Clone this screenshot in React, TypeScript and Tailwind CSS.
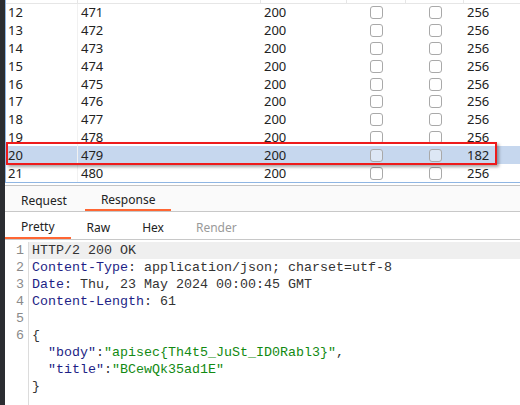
import React from 'react';

const rows = [
  { id: 12, payload: 471, length: 256 },
  { id: 13, payload: 472, length: 256 },
  { id: 14, payload: 473, length: 256 },
  { id: 15, payload: 474, length: 256 },
  { id: 16, payload: 475, length: 256 },
  { id: 17, payload: 476, length: 256 },
  { id: 18, payload: 477, length: 256 },
  { id: 19, payload: 478, length: 256 },
  { id: 20, payload: 479, length: 182 },
  { id: 21, payload: 480, length: 256 },
];

const Checkbox: React.FC = () => (
  <div className="w-[13px] h-[13px] rounded-[3px] border border-[#a9a9a9] bg-white/40" />
);

const Key: React.FC<{ children: React.ReactNode }> = ({ children }) => (
  <span className="text-[#1d1f86]">{children}</span>
);

const Str: React.FC<{ children: React.ReactNode }> = ({ children }) => (
  <span className="text-[#128a12]">{children}</span>
);

// the json body is one logical line (6), soft-wrapped by the editor
const lines: { num?: number; text: React.ReactNode }[] = [
  { num: 1, text: <>HTTP/2 200 OK</> },
  {
    num: 2,
    text: (
      <>
        <Key>Content-Type</Key>: application/json; charset=utf-8
      </>
    ),
  },
  {
    num: 3,
    text: (
      <>
        <Key>Date</Key>: Thu, 23 May 2024 00:00:45 GMT
      </>
    ),
  },
  {
    num: 4,
    text: (
      <>
        <Key>Content-Length</Key>: 61
      </>
    ),
  },
  { num: 5, text: <></> },
  { num: 6, text: <>{'{'}</> },
  {
    text: (
      <>
        {'  '}
        <Key>"body"</Key>:<Str>"apisec{'{'}Th4t5_JuSt_ID0Rabl3{'}'}"</Str>,
      </>
    ),
  },
  {
    text: (
      <>
        {'  '}
        <Key>"title"</Key>:<Str>"BCewQk35ad1E"</Str>
      </>
    ),
  },
  { text: <>{'}'}</> },
];

const App: React.FC = () => {
  return (
    <div className="flex w-[520px] h-[405px] overflow-hidden bg-white text-[#222] font-['Noto_Sans',sans-serif]">
      <div className="w-[5px] shrink-0 bg-[#2b2d31]" />
      <div className="flex-1 min-w-0 flex flex-col">
        {/* results table */}
        <div className="relative border-l border-b border-[#8fb6e3] text-[13px]">
          <div className="grid grid-cols-[72px_183px_86px_59px_58px_1fr] h-[4px] border-b border-[#e6e6e6]">
            <div className="border-r border-[#e6e6e6]" />
            <div className="border-r border-[#e6e6e6]" />
            <div className="border-r border-[#e6e6e6]" />
            <div className="border-r border-[#e6e6e6]" />
            <div className="border-r border-[#e6e6e6]" />
            <div />
          </div>
          {rows.map((r) => (
            <div
              key={r.id}
              className={`grid grid-cols-[72px_183px_86px_59px_58px_1fr] h-[17.8px] items-center leading-none ${
                r.id === 20 ? 'bg-[#c6d7ee]' : ''
              }`}
            >
              <div className="pl-[2px] h-full flex items-center border-r border-[#f1f1f1]">{r.id}</div>
              <div className="pl-[3px]">{r.payload}</div>
              <div className="pl-[3px]">200</div>
              <div className="flex justify-center">
                <Checkbox />
              </div>
              <div className="flex justify-center">
                <Checkbox />
              </div>
              <div className="pl-[3px]">{r.length}</div>
            </div>
          ))}
          <div className="absolute left-0 top-[142px] w-[491px] h-[23px] border-2 border-[#ee1b1b] shadow-[2px_2px_3px_rgba(0,0,0,0.35)]" />
        </div>

        {/* request / response tabs */}
        <div className="mt-[2px] border-t border-[#c4c4c4] bg-[#fafafa] h-[27px] flex items-stretch text-[12px] border-b border-b-[#c8c8c8]">
          <div className="px-4 flex items-center pt-[5px] mr-[2px]">Request</div>
          <div className="px-4 flex items-center pt-[5px] border-b-2 border-[#ff6633]">Response</div>
        </div>
        <div className="h-[28px] flex items-stretch text-[12px] border-b border-[#c8c8c8]">
          <div className="px-4 flex items-center pt-[5px] border-b-2 border-[#ff6633]">Pretty</div>
          <div className="px-4 flex items-center pt-[5px]">Raw</div>
          <div className="px-4 flex items-center pt-[5px]">Hex</div>
          <div className="px-4 flex items-center pt-[5px] text-[#9a9a9a]">Render</div>
        </div>

        {/* editor */}
        <div className="flex-1 flex pt-[2px] font-['Liberation_Mono',monospace] text-[13.33px] text-[#333]">
          <div className="w-[24px] shrink-0 border-r border-[#dcdcdc] text-right pr-[4px] text-[#8a8a8a]">
            {lines.map((l, i) => (
              <div key={i} className="h-[17px] leading-[17px]">
                {l.num ?? ''}
              </div>
            ))}
          </div>
          <div className="flex-1 min-w-0">
            {lines.map((l, i) => (
              <div
                key={i}
                className={`h-[17px] leading-[17px] pl-[3px] whitespace-pre ${i === 0 ? 'bg-[#efefef]' : ''}`}
              >
                {l.text}
              </div>
            ))}
          </div>
        </div>
      </div>
    </div>
  );
};

export default App;
